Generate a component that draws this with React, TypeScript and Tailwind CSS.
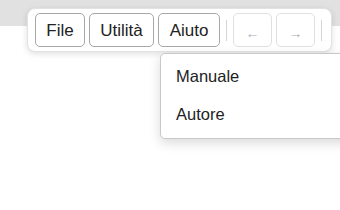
import React from 'react';

export default function App() {
  const btn =
    'h-[34px] rounded-[5px] border border-[#a8a8a8] bg-white text-[17px] text-[#222] leading-none';
  const arrow =
    'h-[34px] w-[39px] rounded-[5px] border border-[#e0e0e0] bg-white text-[14px] text-[#a9afbb] leading-none pt-[5px]';

  return (
    <div
      className="relative w-[340px] h-[210px] overflow-hidden bg-white"
      style={{ fontFamily: '"Liberation Sans", Arial, sans-serif' }}
    >
      {/* top band */}
      <div className="h-[26px] bg-[#e1e1e1]" />

      <div className="absolute left-[27px] top-[8px]">
        <div className="flex items-center h-[44px] pl-[7px] pr-[9px] bg-white border border-[#e2e2e2] rounded-[8px] shadow-[0_2px_6px_rgba(0,0,0,0.12)]">
          <button className={`${btn} w-[50px]`}>File</button>
          <button className={`${btn} w-[65px] ml-[4px]`}>Utilità</button>
          <div className="relative ml-[4px]">
            <button className={`${btn} w-[62px] bg-[#efefef] border-[#9a9a9a]`}>Aiuto</button>
            {/* dropdown */}
            <div className="absolute left-[2px] top-[40px] w-[200px] h-[86px] bg-white border border-[#c8c8c8] rounded-[5px] shadow-[0_4px_12px_rgba(0,0,0,0.15)] pt-[3px] z-10">
              <div className="h-[38px] flex items-center pl-[15px] text-[16.5px] text-[#222]">Manuale</div>
              <div className="h-[38px] flex items-center pl-[15px] text-[16.5px] text-[#222]">Autore</div>
            </div>
          </div>
          <div className="w-px h-[21px] bg-[#d4d4d4] ml-[6px]" />
          <button className={`${arrow} ml-[6px]`}>←</button>
          <button className={`${arrow} ml-[4px]`}>→</button>
          <div className="w-px h-[21px] bg-[#d4d4d4] ml-[6px]" />
        </div>
      </div>
    </div>
  );
}
